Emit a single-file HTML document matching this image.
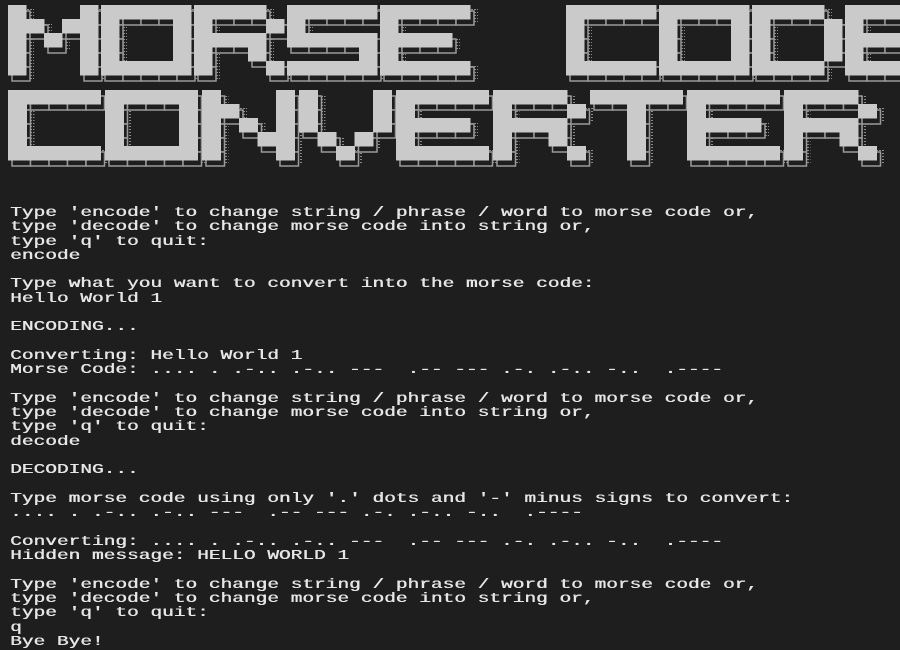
<!DOCTYPE html>
<html><head><meta charset="utf-8"><style>
html,body{margin:0;padding:0;background:#1e1e1e;width:900px;height:650px;overflow:hidden}
#b{position:absolute;left:0;top:0}
pre{position:absolute;left:10px;top:206px;margin:0;font-family:"Liberation Mono",monospace;font-size:14px;line-height:14.3px;color:#e6e6e6;transform:scaleX(1.391);transform-origin:0 0;white-space:pre;text-shadow:0.4px 0 0 #e6e6e6}
</style></head><body>
<svg id="b" width="900" height="185" xmlns="http://www.w3.org/2000/svg"></svg>
<pre>Type 'encode' to change string / phrase / word to morse code or,
type 'decode' to change morse code into string or,
type 'q' to quit:
encode

Type what you want to convert into the morse code:
Hello World 1

ENCODING...

Converting: Hello World 1
Morse Code: .... . .-.. .-.. ---  .-- --- .-. .-.. -..  .----

Type 'encode' to change string / phrase / word to morse code or,
type 'decode' to change morse code into string or,
type 'q' to quit:
decode

DECODING...

Type morse code using only '.' dots and '-' minus signs to convert:
.... . .-.. .-.. ---  .-- --- .-. .-.. -..  .----

Converting: .... . .-.. .-.. ---  .-- --- .-. .-.. -..  .----
Hidden message: HELLO WORLD 1

Type 'encode' to change string / phrase / word to morse code or,
type 'decode' to change morse code into string or,
type 'q' to quit:
q
Bye Bye!</pre>
<script>
var G={
M:["X...X","XX.XX","X.X.X","X...X","X...X"],
O:["XXXXX","X...X","X...X","X...X","XXXXX"],
R:["XXXX.","X...X","XXXX.","X..X.","X...X"],
S:["XXXXX","X....","XXXXX","....X","XXXXX"],
E:["XXXXX","X....","XXXX.","X....","XXXXX"],
C:["XXXXX","X....","X....","X....","XXXXX"],
D:["XXXX.","X...X","X...X","X...X","XXXX."],
N:["X...X","XX..X","X.X.X","X..XX","X...X"],
V:["X...X","X...X","X...X",".X.X.","..X.."],
T:["XXXXX","..X..","..X..","..X..","..X.."],
" ":[".....",".....",".....",".....","....."]};
var s='<defs><pattern id="d" width="3" height="3" patternUnits="userSpaceOnUse"><rect width="2" height="1" fill="#8a8a8a"/></pattern></defs>';
function row(str,y,pitch,cw){
 for(var pass=0;pass<3;pass++){
 for(var i=0;i<str.length;i++){
  var g=G[str[i]],x0=8+i*pitch;
  for(var r=0;r<5;r++)for(var c=0;c<5;c++)if(g[r][c]=='X'){
   var x=x0+c*cw,yy=y+r*14;
   if(pass==0)s+='<rect x="'+(x+8)+'" y="'+(yy+4)+'" width="'+cw+'" height="14" fill="url(#d)"/>';
   else if(pass==1)s+='<rect x="'+(x+4)+'" y="'+(yy+6)+'" width="'+cw+'" height="14" fill="#1e1e1e" stroke="#9a9a9a" stroke-width="1.5"/>';
   else s+='<rect x="'+x+'" y="'+yy+'" width="'+(cw+0.5)+'" height="14.5" fill="#cacaca"/>';
  }
 }}
}
row("MORSE CODE",5,93,18);
row("CONVERTER",90,97,18.5);
document.getElementById('b').innerHTML=s;
</script>
</body></html>
